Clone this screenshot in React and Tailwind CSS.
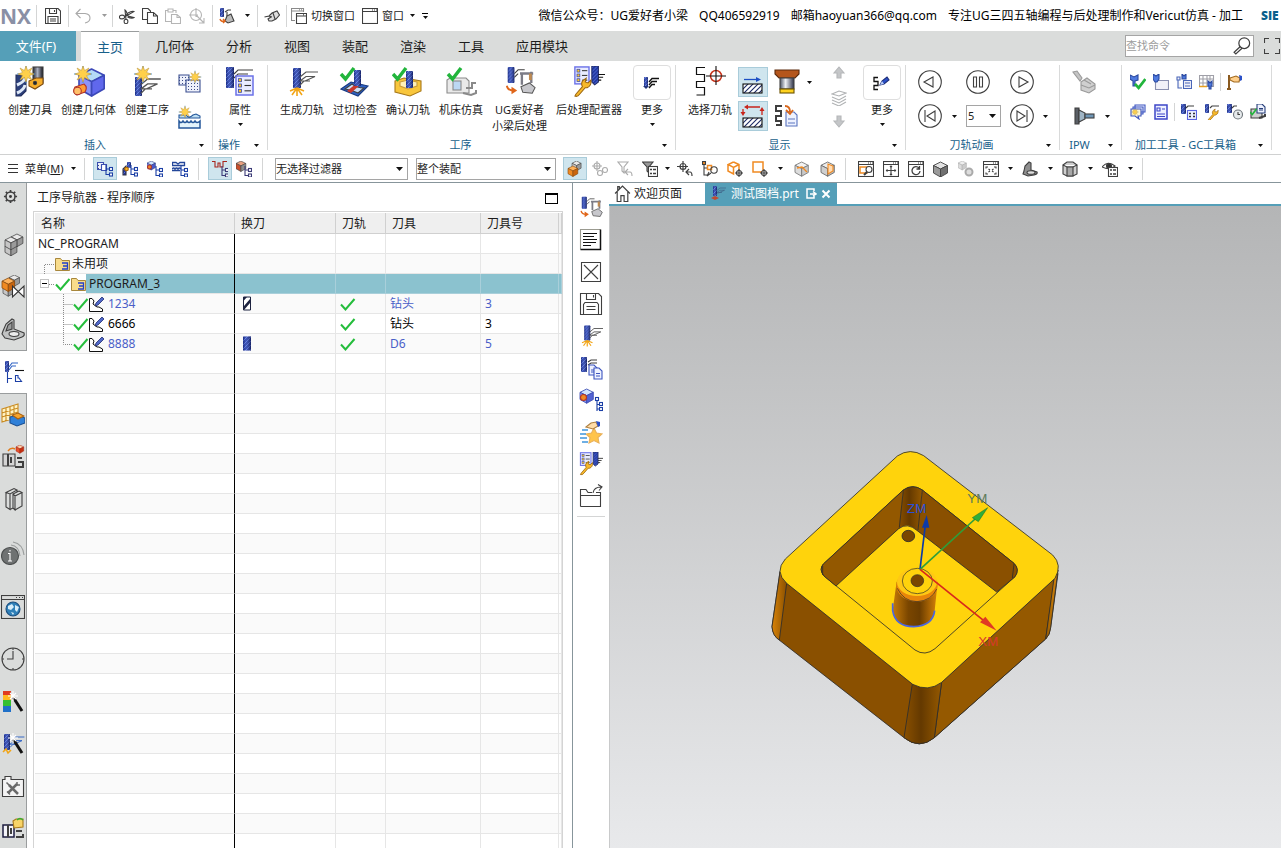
import { useState } from 'react';
import clsx from 'clsx';

/* ─── Shared drawing parts ─── */
const Defs = () => (
  <svg width="0" height="0" className="absolute" aria-hidden="true">
    <defs>
      <pattern id="flute" width="4" height="4" patternUnits="userSpaceOnUse">
        <rect width="4" height="4" fill="#2238a0" />
        <path d="M-1 3L3 -1M1 5L5 1" stroke="#5f7ce6" strokeWidth="0.9" />
      </pattern>
      <pattern id="hatch" width="5" height="5" patternUnits="userSpaceOnUse">
        <rect width="5" height="5" fill="#fff" />
        <path d="M-1 6L6 -1M-1 1L1 -1M4 6L6 4" stroke="#1b2a66" strokeWidth="1.1" />
      </pattern>
      <pattern id="dots" width="3" height="3" patternUnits="userSpaceOnUse">
        <rect width="3" height="3" fill="#eef1fb" />
        <rect x="1" y="1" width="1" height="1" fill="#3b4a86" />
      </pattern>
      <linearGradient id="steel">
        <stop offset="0" stopColor="#4d5566" />
        <stop offset="0.4" stopColor="#eef1f6" />
        <stop offset="1" stopColor="#2b2f45" />
      </linearGradient>
      <linearGradient id="darkSteel">
        <stop offset="0" stopColor="#23262f" />
        <stop offset="0.45" stopColor="#a9afc0" />
        <stop offset="1" stopColor="#14151c" />
      </linearGradient>
      <linearGradient id="shade">
        <stop offset="0" stopColor="#0a1246" stopOpacity="0.35" />
        <stop offset="0.35" stopColor="#9db4ff" stopOpacity="0.25" />
        <stop offset="1" stopColor="#05082e" stopOpacity="0.55" />
      </linearGradient>
      <linearGradient id="corner">
        <stop offset="0" stopColor="#8a5000" />
        <stop offset="0.45" stopColor="#643900" />
        <stop offset="1" stopColor="#955900" />
      </linearGradient>
      <linearGradient id="sideL">
        <stop offset="0" stopColor="#d98308" />
        <stop offset="1" stopColor="#8a5000" />
      </linearGradient>
      <linearGradient id="sideR">
        <stop offset="0" stopColor="#955900" />
        <stop offset="1" stopColor="#dd8a0c" />
      </linearGradient>
      <linearGradient id="bossBody">
        <stop offset="0" stopColor="#c67a08" />
        <stop offset="0.35" stopColor="#7a4600" />
        <stop offset="0.6" stopColor="#6b3d00" />
        <stop offset="1" stopColor="#d98308" />
      </linearGradient>
    </defs>
  </svg>
);

const Ico = ({ s = 16, vb = 16, children }) => (
  <svg width={s} height={s} viewBox={`0 0 ${vb} ${vb}`} fill="none" stroke="#3f3f3f" strokeWidth="1.1" className="shrink-0" aria-hidden="true">
    {children}
  </svg>
);

const Mill = ({ x, y, w, h }) => (
  <g stroke="none">
    <rect x={x} y={y} width={w} height={h} rx="1" fill="url(#flute)" />
    <rect x={x} y={y} width={w} height={h} rx="1" fill="url(#shade)" />
  </g>
);

const Feed = ({ x, y, s = 1, c = '#555' }) => (
  <path transform={`translate(${x} ${y}) scale(${s})`} d="M0 5L6 0H18M6 0M0 9L6 4.500H15L5 9H0M0 13L4 9H10" stroke={c} strokeWidth="1.2" />
);

const Burst = ({ x, y, s = 1 }) => (
  <g transform={`translate(${x} ${y}) scale(${s})`}>
    <path d="M0-9V9M-9 0H9" stroke="#4f8fc8" strokeWidth="1" />
    <path
      d="M0-8L1.600-3.500L6-6L3.500-1.600L8 0L3.500 1.600L6 6L1.600 3.500L0 8L-1.600 3.500L-6 6L-3.500 1.600L-8 0L-3.500-1.600L-6-6L-1.600-3.500Z"
      fill="#ffd04a"
      stroke="#c09a44"
      strokeWidth="0.6"
    />
  </g>
);

const Tick = ({ x, y, s = 1 }) => (
  <path transform={`translate(${x} ${y}) scale(${s})`} d="M0 6L4.500 11L13 0" stroke="#22b53c" strokeWidth="3.400" />
);

const Tree = ({ x, y, c = '#1b3fa6' }) => (
  <g transform={`translate(${x} ${y})`} stroke={c}>
    <path d="M1 0V9.500H4M1 4H4" />
    <rect x="4.500" y="2.500" width="3" height="3" fill="#fff" />
    <rect x="4.500" y="8" width="3" height="3" fill="#fff" />
  </g>
);

const Cube = ({ x, y, s = 1, a = '#e9e9e9', b = '#c6c6c6', c = '#9a9a9a', line = '#444' }) => (
  <g transform={`translate(${x} ${y}) scale(${s})`} stroke={line} strokeWidth="0.9" strokeLinejoin="round">
    <path d="M7 0L14 3.500L7 7L0 3.500Z" fill={a} />
    <path d="M0 3.500L7 7V15L0 11Z" fill={b} />
    <path d="M14 3.500L7 7V15L14 11Z" fill={c} />
  </g>
);

const Wrench = ({ x, y, s = 1 }) => (
  <path
    transform={`translate(${x} ${y}) scale(${s})`}
    d="M1 17L8 9Q6 5 9 2L12 0L11 4L14 5L17 2Q18 8 13 10L11 10L5 17Q3 20 0 19Z"
    fill="#f7b92a"
    stroke="#9a6510"
  />
);

const Page = ({ x, y, w = 9, h = 11, c = '#3d55c0' }) => (
  <g transform={`translate(${x} ${y})`} stroke={c}>
    <path d={`M0 0H${w - 3}L${w} 3V${h}H0Z`} fill="#eef2ff" />
    <path d={`M2 ${h / 2}H${w - 2}M2 ${h - 3}H${w - 2}`} />
  </g>
);

const List = ({ x, y, w, h }) => (
  <g transform={`translate(${x} ${y})`}>
    <rect width={w} height={h} fill="#e9ecff" stroke="#6b72e8" strokeWidth="1.500" />
    {[0.22, 0.5, 0.78].map((k) => (
      <g key={k}>
        <rect x={w * 0.15} y={h * k - 1.5} width="3" height="3" fill="#ffc928" stroke="#3a49a8" strokeWidth="0.800" />
        <path d={`M${w * 0.5} ${h * k}H${w * 0.88}`} stroke="#333" />
      </g>
    ))}
  </g>
);

const Window = ({ children }) => (
  <g>
    <rect x="0.500" y="0.500" width="15" height="15" fill="#fff" />
    <path d="M0.500 3.500H15.500M10 2H11M12 2H13M14 2H15" />
    {children}
  </g>
);

const Caret = ({ dim }) => (
  <svg width="5" height="3" viewBox="0 0 5 3" className="shrink-0" aria-hidden="true">
    <path d="M0 0H5L2.500 3Z" fill={dim ? '#9a9a9a' : '#111'} />
  </svg>
);

/* ─── Icons ─── */
const icons = {
  save: (
    <>
      <path d="M0.500 0.500H13L15.500 3V15.500H0.500Z" />
      <path d="M4.500 0.500V5.500H11.500V0.500M9.500 2V4M3 15.500V8.500H13V15.500M5 11H11M5 13H11" />
    </>
  ),
  undo: <path d="M5.500 1L1 5.500L5.500 10M1 5.500H10Q15 6 15 10Q15 14 10 15" stroke="#a9a9a9" />,
  cut: (
    <>
      <ellipse cx="3" cy="9" rx="2.600" ry="1.900" />
      <ellipse cx="7" cy="13.500" rx="1.900" ry="2.200" />
      <path d="M5.500 9L15 3.500Q13 2.500 9 5L6.500 8M7 11.500L6 2Q7.500 3 8 5.500L9 8L15 9.500Q13 11 8.500 9" />
    </>
  ),
  copy: (
    <>
      <path d="M5 11.500H0.500V0.500H6L8.500 3V4" />
      <path d="M5.500 4.500H11.500L15.500 8V15.500H5.500ZM11.500 4.500V8H15.500" fill="#fff" />
    </>
  ),
  paste: (
    <g stroke="#b5b5b5">
      <path d="M6 13.500H0.500V2.500H3V1H8V2.500H11V5M3 2.500V4H8V2.500" />
      <path d="M6.500 6.500H12L15.500 9.500V15.500H6.500ZM12 6.500V9.500H15.500" />
    </g>
  ),
  target: (
    <g stroke="#b5b5b5">
      <circle cx="7" cy="7" r="5.500" />
      <path d="M7 0V9M0 7H9M7 7L15 15M15 10V15H10M12 15H15V12" />
    </g>
  ),
  post: (
    <>
      <Mill x={1} y={0} w={4} h={9} />
      <path d="M6 4L9 2H12M8 4V8" />
      <path d="M8 8L12 6L15 13L9 15L6 13Z" fill="#bbb" />
      <path d="M1 11Q2 14 5 13M4 11L6 13L4 15" stroke="#e0661a" strokeWidth="1.500" />
    </>
  ),
  hand: (
    <path d="M0.500 9L5 8L8 5L13 3L15.500 7L12 11L8 13H5L4 11L7 9M5 8L8 9M9 5L11 11" fill="#ddd" />
  ),
  windows: (
    <>
      <path d="M4 12.500H0.500V0.500H12.500V4M0.500 3H12.500M8 1.700H9M10 1.700H11" stroke="#8a8a8a" />
      <path d="M5.500 5.500H15.500V15.500H5.500ZM5.500 8H15.500M12 6.800H13" fill="#fff" />
    </>
  ),
  window: <Window />,
  tFolderNode: (
    <>
      <path d="M0.500 1.500H6.500V8.500H0.500Z" fill="url(#dots)" stroke="#3b4fb0" />
      <path d="M4.500 3.500H9.500V9.500H4.500Z" fill="#fff" stroke="#3b4fb0" />
      <Tree x={8} y={4} />
    </>
  ),
  tTool: (
    <>
      <Mill x={5} y={1} w={4} h={6} />
      <path d="M1 14V8L4 5V14Z" fill="url(#flute)" stroke="#334" />
      <circle cx="4.500" cy="8" r="1.800" fill="#ffb529" stroke="#a60" />
      <Tree x={8} y={4} />
    </>
  ),
  tGeom: (
    <>
      <Cube x={0} y={0} s={0.6} a="#cfe4ff" b="#7b8df0" c="#4b59c8" line="#24357a" />
      <circle cx="2.500" cy="6" r="2" fill="#f08a22" stroke="#a33" />
      <Tree x={8} y={5} />
    </>
  ),
  tMethod: (
    <>
      <path d="M0.500 1.500H4L6 3L8 1.500H12.500V4.500H0.500ZM0 9.500H8M0 8Q1.500 6 3 8Q4.500 6 6 8Q7.500 6 9 8" stroke="#24479a" strokeWidth="1.300" />
      <Tree x={8} y={5} />
    </>
  ),
  tPath: (
    <>
      <path d="M0 0.500H3V6H6V2H8V6H11V0.500H15" stroke="#a8251c" strokeWidth="1.100" />
      <Tree x={9} y={5} c="#3c3c78" />
    </>
  ),
  tBody: (
    <>
      <Cube x={0} y={0} s={0.7} a="#e9a080" b="#c9502c" c="#8d8d8d" />
      <Tree x={8} y={5} c="#3c3c78" />
    </>
  ),
  bodyOrange: (
    <>
      <Cube x={5} y={0} s={0.65} />
      <Cube x={1} y={5} s={0.7} a="#ffb35c" b="#f08a22" c="#c9650e" line="#8a4d10" />
    </>
  ),
  linkDim: (
    <g stroke="#ababab">
      <circle cx="5" cy="5" r="3" />
      <path d="M5 0V10M0 5H10" />
      <circle cx="8" cy="12" r="2.500" />
      <circle cx="13" cy="9" r="2.500" />
    </g>
  ),
  filterDim: <path d="M1 1H11L7 6V12L5 10V6ZM11 8L8 11L11 14M8 11H13Q15 11 15 15" stroke="#ababab" />,
  filterList: (
    <>
      <path d="M0.500 1H11L7 6V12L5 10V6Z" fill="#999" />
      <rect x="6.500" y="5.500" width="9" height="10" fill="#fff" />
      <path d="M8 8.500H10M8 12.500H10M11 8.500H14M11 12.500H14" strokeWidth="1.600" />
    </>
  ),
  snap: <path d="M6 0V11M0 5.500H11M3 5.500A3 3 0 1 0 9 5.500A3 3 0 1 0 3 5.500M12 8L9 11L12 14M9 11H13Q15 11 15 15" strokeWidth="1.200" />,
  selTree: (
    <>
      <rect x="0.500" y="0.500" width="3" height="3" fill="#f08a22" />
      <path d="M2 4V14H5M2 7H6" />
      <rect x="5.500" y="4.500" width="4" height="4" stroke="#f08a22" strokeWidth="1.500" />
      <circle cx="12" cy="9" r="3.200" />
      <path d="M9 12L5 15L7 11" />
    </>
  ),
  selCube: (
    <>
      <path d="M6.500 1L12 3.500V9M12 3.500L6.500 6.500L1 3.500L6.500 1M1 3.500V10L6.500 13V6.500" stroke="#f08a22" strokeWidth="1.500" />
      <circle cx="12" cy="12" r="2.500" />
      <path d="M12 8V16M8 12H16" />
    </>
  ),
  selRect: (
    <>
      <rect x="1" y="1" width="10" height="10" stroke="#f08a22" strokeWidth="1.500" />
      <circle cx="12" cy="12" r="2.500" fill="#fff" />
      <path d="M12 8V16M8 12H16" />
    </>
  ),
  cubeCut: (
    <>
      <Cube x={1} y={1} s={0.95} a="#f2f2f2" b="#dcdcdc" c="#c9c9c9" line="#777" />
      <path d="M3 7L8 6L13 11" stroke="#f08a22" strokeWidth="1.300" />
    </>
  ),
  cubeFace: (
    <>
      <Cube x={1} y={1} s={0.95} a="#ececec" b="#cfcfcf" c="#bcbcbc" line="#666" />
      <path d="M8 3V13L13 10V5Z" fill="#ffdcb3" stroke="#f08a22" />
    </>
  ),
  winZoom: (
    <Window>
      <rect x="2" y="6" width="7" height="6" stroke="#f08a22" strokeWidth="1.500" />
      <circle cx="11" cy="8.500" r="3" fill="#fff" />
      <path d="M9 11L6 14" strokeWidth="2" />
    </Window>
  ),
  winPan: <Window><path d="M8 5V14M3.500 9.500H12.500M7 6L8 5L9 6M7 13L8 14L9 13M4.500 8.500L3.500 9.500L4.500 10.500M11.500 8.500L12.500 9.500L11.500 10.500" /></Window>,
  winRotate: <Window><path d="M11 7A4 4 0 1 0 12 10M11.500 5V8H8.500" strokeWidth="1.300" /></Window>,
  winFit: <Window><path d="M3 7.500V6H5M11 6H13V7.500M3 11.500V13H5M11 13H13V11.500M5.500 8L7 9M10.500 8L9 9M5.500 11L7 10M10.500 11L9 10" /></Window>,
  cubeDark: <Cube x={0.5} y={1} s={1} a="#e3e3e3" b="#9a9a9a" c="#707070" />,
  cubeDim: (
    <>
      <Cube x={0} y={0} s={0.6} a="#eee" b="#ddd" c="#ccc" line="#aaa" />
      <circle cx="11" cy="11" r="3.500" fill="#ddd" stroke="#aaa" strokeWidth="2" />
    </>
  ),
  bracket: (
    <>
      <path d="M2 10L3 5L7 1L9 2V9L15 11Q16 13 12 14L6 15L1 13Z" fill="#8f8f8f" />
      <ellipse cx="9" cy="11.500" rx="4" ry="1.800" fill="#ddd" />
    </>
  ),
  prism: (
    <>
      <path d="M1 4L5 1H11L15 4L11 6H5ZM1 4V13L5 15H11L15 13V4" fill="#cfcfcf" />
      <path d="M5 6V15H11V6Z" fill="#a8a8a8" />
    </>
  ),
  eyeList: (
    <>
      <path d="M0 6Q6 -1 13 5Q8 10 0 6Z" fill="#fff" />
      <circle cx="7" cy="5" r="2.500" fill="#333" />
      <rect x="6.500" y="6.500" width="9" height="9" fill="#fff" />
      <path d="M8 9H10M8 13H10M11 9H14M11 13H14" strokeWidth="1.500" />
    </>
  ),
  gear: (
    <>
      <circle cx="8" cy="8" r="4.800" strokeWidth="1.600" />
      <circle cx="8" cy="8" r="1" fill="#333" />
      <path d="M8 1V3.500M8 12.500V15M1 8H3.500M12.500 8H15M3 3L4.500 4.500M11.500 11.500L13 13M13 3L11.500 4.500M4.500 11.500L3 13" strokeWidth="1.800" />
    </>
  ),
};

const big = {
  createTool: (
    <>
      <rect x="19" y="1" width="10" height="16" fill="url(#darkSteel)" />
      <path d="M15 15L22 12H29V18L21 23L15 20Z" fill="#f6ae2c" stroke="#7d4a10" />
      <circle cx="21" cy="17" r="1.600" fill="#222" />
      <path d="M2 9L12 10V25L7 30H2Z" fill="#2b3f7a" stroke="#25305e" />
      <path d="M3 19Q10 16 11 12M3 27Q10 24 11 19" stroke="#dfe9f8" strokeWidth="3" />
      <Burst x={12} y={8} />
    </>
  ),
  createGeom: (
    <>
      <Cube x={6} y={3} s={1.8} a="#b5dcf6" b="#8c94f8" c="#6068ec" line="#3c49b8" />
      <path d="M2 21L11 18Q15 21 12 26L4 29Q-1 26 2 21Z" fill="#ff9d33" stroke="#b1352a" />
      <circle cx="4.500" cy="25" r="3.800" fill="#ffc06a" stroke="#b1352a" />
      <Burst x={10} y={8} />
    </>
  ),
  createOp: (
    <>
      <Mill x={4} y={11} w={7} h={19} />
      <Feed x={10} y={13} s={1.1} />
      <Burst x={12} y={8} />
    </>
  ),
  props: (
    <>
      <Mill x={2} y={1} w={8} h={21} />
      <path d="M10 8L14 4H29M10 12L14 8H24" />
      <List x={12} y={10} w={17} h={19} />
    </>
  ),
  generate: (
    <>
      <Mill x={7} y={2} w={8} h={20} />
      <Feed x={14} y={6} s={1} />
      <path d="M11 22V30M11 22L6 29M11 22L16 29M11 22L4 25M11 22L18 25" stroke="#f2a516" strokeWidth="1.600" />
    </>
  ),
  gouge: (
    <>
      <path d="M2 23L12 16L29 20L19 30Z" fill="#2f62c4" stroke="#183a80" />
      <path d="M6 23L13 18Q18 22 25 22L19 27Q13 24 6 23Z" fill="#c8dffa" />
      <path d="M8 25L18 17L22 18L12 27Z" fill="#c9382c" stroke="none" />
      <Mill x={15} y={4} w={7} h={16} />
      <Tick x={2} y={2} />
    </>
  ),
  verify: (
    <>
      <path d="M3 15L12 12L29 15V25L18 30L3 26Z" fill="#f8c63c" stroke="#a8791a" />
      <path d="M8 16L16 14L25 16V20L16 23L8 20Z" fill="#fff1b8" stroke="#c89a3a" />
      <Mill x={14} y={5} w={7} h={17} />
      <Tick x={1} y={2} />
    </>
  ),
  machine: (
    <>
      <path d="M2 14L5 12H21L24 15V27H2Z" fill="#e9e9e9" stroke="#8a8a8a" />
      <rect x="8" y="15" width="8" height="9" fill="#bcd8f4" stroke="#8a8a8a" />
      <path d="M21 22H27V17H31M18 27L26 29L31 27V24" stroke="#8a8a8a" strokeWidth="2" />
      <Tick x={3} y={2} />
    </>
  ),
  postUG: (
    <>
      <Mill x={4} y={1} w={7} h={17} />
      <path d="M11 8L15 4H22M11 12L15 8" />
      <path d="M17 8H31M29 6V18M19 9V20" strokeWidth="2.500" stroke="#7b7b86" />
      <path d="M28 8V15" stroke="#c08a50" strokeWidth="3" />
      <path d="M18 22L27 18L33 23L30 29L20 28Z" fill="#c7c7cc" stroke="#555" />
      <path d="M3 21Q4 26 10 26" stroke="#e0661a" strokeWidth="2" />
      <path d="M8 22L14 26L8 30Z" fill="#e0661a" stroke="none" />
    </>
  ),
  postConf: (
    <>
      <List x={2} y={1} w={15} h={18} />
      <path d="M20 0H27V17L23 20L20 17Z" fill="url(#flute)" stroke="#222c66" />
      <path d="M27 9H34M27 12H32M27 15H30" stroke="#111" />
      <Wrench x={2} y={13} />
    </>
  ),
  moreOp: (
    <>
      <Mill x={7} y={9} w={4} h={10} />
      <path d="M6 18H12L9 21Z" fill="#22357a" stroke="none" />
      <path d="M12 14L15 10.500H22M12 17L15 13.500H20M12 20L15 16.500H18" stroke="#111" strokeWidth="1.300" />
    </>
  ),
  pickPath: (
    <>
      <path d="M11 1.500H2.500V8.500H10.500V15.500H2.500V21.500H10.500V29H2.500" stroke="#111" strokeWidth="1.200" />
      <circle cx="22" cy="10" r="5.500" stroke="#c8351c" strokeWidth="1.500" />
      <path d="M22 0V19M12 10H32" stroke="#111" />
    </>
  ),
  moreShow: (
    <>
      <path d="M11 9.500H7V13.500H11V17.500H7V21.500H11" stroke="#111" strokeWidth="1.300" />
      <path d="M13 17L15 13L20 9L22 12L17 16Z" fill="#2b50c8" stroke="#1d2d77" />
      <path d="M13 17L15 13L17 16Z" fill="#b9cdf8" stroke="none" />
    </>
  ),
};

const RibbonButton = ({ icon, label, caret, children }) => (
  <button type="button" className="flex shrink-0 flex-col items-center">
    {children || <Ico s={32} vb={32}>{icon}</Ico>}
    <span className="mt-1 whitespace-pre-line text-center">{label}</span>
    {caret && <span className="flex h-3 items-center"><Caret /></span>}
  </button>
);

const MoreButton = ({ icon }) => (
  <RibbonButton label="更多" caret>
    <span className="-mt-px mb-[-2px] flex h-[35px] w-[38px] items-center justify-center rounded-sm border border-[#dedede] bg-white">
      <Ico s={30} vb={30}>{icon}</Ico>
    </span>
  </RibbonButton>
);

const Group = ({ label, className, bodyClass, children }) => (
  <>
    <section className={clsx('flex shrink-0 flex-col', className)}>
      <div className={clsx('flex h-[75px] items-start', bodyClass)}>{children}</div>
      <div className="flex h-[18px] items-center text-[#17608a]">
        <span className="flex-1 whitespace-nowrap text-center">{label}</span>
        <button type="button" aria-label={`${label} 选项`} className="flex h-4 w-[22px] items-center justify-center">
          <Caret />
        </button>
      </div>
    </section>
    <span className="my-1 w-px shrink-0 bg-[#d9dada]" />
  </>
);

const Tool = ({ name, label, on, className = 'w-6', children }) => (
  <button
    type="button"
    aria-label={label || name}
    className={clsx('flex h-[23px] shrink-0 items-center justify-center', className, on && 'border border-[#a9ccda] bg-[#cfe5ee]')}
  >
    {children || <Ico>{icons[name]}</Ico>}
  </button>
);

const Drop = ({ label, dim, className = 'w-3' }) => (
  <button type="button" aria-label={label || '展开'} className={clsx('flex h-5 shrink-0 items-center justify-center', className)}>
    <Caret dim={dim} />
  </button>
);

const Sep = ({ className }) => <span className={clsx('h-[22px] w-px shrink-0 bg-[#d4d5d5]', className)} />;

const Choice = ({ label, options, className, caretClass = 'right-1' }) => (
  <span className={clsx('relative flex h-[22px] shrink-0 items-center border border-[#a5a5a5] bg-white', className)}>
    <select aria-label={label} className="h-full w-full appearance-none bg-transparent outline-none">
      {options.map((o) => (
        <option key={o}>{o}</option>
      ))}
    </select>
    <span className={clsx('pointer-events-none absolute', caretClass)}>
      <svg width="7" height="4" viewBox="0 0 7 4" aria-hidden="true">
        <path d="M0 0H7L3.500 4Z" fill="#111" />
      </svg>
    </span>
  </span>
);

const TitleBar = () => (
  <header className="flex h-[31px] shrink-0 items-center overflow-hidden whitespace-nowrap bg-white text-[11px]">
    <span className="w-9 shrink-0 font-['Open_Sans',sans-serif] text-[21px] font-bold leading-[30px] text-[#8a90a5]">NX</span>
    <Sep />
    <Tool name="save" label="保存" className="w-[31px]" />
    <Sep />
    <Tool name="undo" label="撤消" className="w-7" />
    <Drop dim className="w-[15px]" />
    <Sep />
    <div className="flex pl-0.5">
      <Tool name="cut" label="剪切" />
      <Tool name="copy" label="复制" className="w-[22px]" />
      <Tool name="paste" label="粘贴" />
      <Tool name="target" label="重复命令" />
    </div>
    <Sep className="ml-[3px]" />
    <Tool name="post" label="后处理" className="w-7" />
    <Drop className="w-3" />
    <Sep className="ml-1" />
    <Tool name="hand" label="触控" className="w-7" />
    <Sep />
    <button type="button" className="ml-1 flex shrink-0 items-center gap-1">
      <Ico>{icons.windows}</Ico>
      切换窗口
    </button>
    <button type="button" className="ml-[7px] flex shrink-0 items-center gap-1">
      <Ico>{icons.window}</Ico>
      窗口
      <span className="ml-0.5"><Caret /></span>
    </button>
    <button type="button" aria-label="自定义工具条" className="ml-[7px] flex shrink-0 flex-col items-center gap-0.5">
      <span className="h-px w-1.5 bg-black" />
      <Caret />
    </button>
    <h1 className="ml-auto flex shrink-0 gap-[11px] text-[12px] text-black">
      <span>微信公众号：UG爱好者小梁</span>
      <span>QQ406592919</span>
      <span>邮箱haoyuan366@qq.com</span>
      <span>专注UG三四五轴编程与后处理制作和Vericut仿真 - 加工</span>
    </h1>
    <span className="ml-[18px] w-5 shrink-0 font-['Open_Sans',sans-serif] text-[12px] font-extrabold text-[#0b5f8c]">SIE</span>
  </header>
);

const menuTabs = ['主页', '几何体', '分析', '视图', '装配', '渲染', '工具', '应用模块'];

const MenuTabs = () => {
  const [active, setActive] = useState('主页');
  return (
    <nav className="flex h-[30px] shrink-0 items-stretch bg-[#dadcdb] text-[13px]">
      <button type="button" className="mr-[5px] w-[76px] shrink-0 bg-[#559fb8] pr-1 text-white">文件(F)</button>
      {menuTabs.map((tab) => (
        <button
          key={tab}
          type="button"
          onClick={() => setActive(tab)}
          className={clsx('shrink-0 whitespace-nowrap px-4', active === tab && 'border-t border-[#9a9d9e] bg-white text-[#17608a]')}
        >
          {tab}
        </button>
      ))}
      <label className="my-1 ml-auto flex w-[129px] items-center border border-[#a5a5a5] bg-white">
        <input placeholder="查找命令" aria-label="查找命令" className="min-w-0 flex-1 bg-transparent text-[11px] outline-none placeholder:text-[#9c9c9c]" />
        <span className="pr-0.5">
          <Ico s={18}>
            <circle cx="10" cy="5.500" r="4.800" />
            <path d="M6.500 8.500L1 13.500L2.500 15L8 10" />
          </Ico>
        </span>
      </label>
      <button type="button" aria-label="全屏" className="ml-2.5 w-[17px] shrink-0">
        <Ico>
          <path d="M0.500 5V0.500H5M11 0.500H15.500V5M0.500 11V15.500H5M11 15.500H15.500V11" />
        </Ico>
      </button>
    </nav>
  );
};

const Play = ({ label, d }) => (
  <button type="button" aria-label={label}>
    <Ico s={24} vb={24}>
      <circle cx="12" cy="12" r="11.300" />
      <path d={d} />
    </Ico>
  </button>
);

const GcCell = ({ label, children }) => (
  <button type="button" aria-label={label} className="flex h-[30px] w-[23px] shrink-0 items-center justify-center">
    <Ico>{children}</Ico>
  </button>
);

const Ribbon = () => (
  <div className="flex h-[93px] shrink-0 overflow-hidden bg-white text-[11px] leading-4">
    <Group label="插入" className="w-[212px]" bodyClass="gap-[9px] pl-2 pt-[5px]">
      <RibbonButton icon={big.createTool} label="创建刀具" />
      <RibbonButton icon={big.createGeom} label="创建几何体" />
      <RibbonButton icon={big.createOp} label="创建工序" />
      <div className="flex flex-col gap-[11px] pt-1">
        <button type="button" aria-label="创建程序">
          <Ico s={24} vb={24}>
            <path d="M1 5H11V15H1Z" fill="url(#dots)" stroke="#3b4f90" />
            <path d="M8 10H22V22H8Z" fill="url(#dots)" stroke="#3b4f90" />
            <Burst x={17} y={7} s={0.7} />
          </Ico>
        </button>
        <button type="button" aria-label="创建方法">
          <Ico s={24} vb={24}>
            <path d="M1 13V10H8Q11 14 15 10L18 9L22 11V13Z" fill="#bfe0f4" stroke="#24579a" />
            <path d="M1 23V16Q3 19 5 16Q7 19 9 16Q11 19 13 16Q15 19 17 16Q19 19 22 16V23Z" fill="#e4f4fc" stroke="#24579a" strokeWidth="1.500" />
            <Burst x={7} y={7} s={0.7} />
          </Ico>
        </button>
      </div>
    </Group>

    <Group label="操作" className="w-[54px]" bodyClass="justify-center pt-[5px]">
      <RibbonButton icon={big.props} label="属性" caret />
    </Group>

    <Group label="工序" className="w-[407px]" bodyClass="gap-[9px] pl-3 pt-[5px]">
      <RibbonButton icon={big.generate} label="生成刀轨" />
      <RibbonButton icon={big.gouge} label="过切检查" />
      <RibbonButton icon={big.verify} label="确认刀轨" />
      <RibbonButton icon={big.machine} label="机床仿真" />
      <RibbonButton label={'UG爱好者\n小梁后处理'}>
        <Ico s={32} vb={34}>{big.postUG}</Ico>
      </RibbonButton>
      <RibbonButton label="后处理配置器">
        <Ico s={32} vb={34}>{big.postConf}</Ico>
      </RibbonButton>
      <div className="pl-0.5">
        <MoreButton icon={big.moreOp} />
      </div>
    </Group>

    <Group label="显示" className="w-[229px]" bodyClass="gap-1.5 pl-3 pt-[5px]">
      <RibbonButton icon={big.pickPath} label="选择刀轨" />
      <div className="flex flex-col gap-1 pt-px">
        <button type="button" aria-label="显示方向" className="flex size-[30px] items-center justify-center border border-[#a9ccda] bg-[#cfe5ee]">
          <Ico s={28} vb={28}>
            <path d="M5 11.500H19" stroke="#1d4fc4" strokeWidth="1.300" />
            <path d="M17 9L22 11.500L17 14Z" fill="#1d4fc4" stroke="none" />
            <rect x="4" y="16" width="19" height="9" fill="url(#hatch)" stroke="#111" />
          </Ico>
        </button>
        <button type="button" aria-label="显示移刀" className="flex size-[30px] items-center justify-center border border-[#a9ccda] bg-[#cfe5ee]">
          <Ico s={28} vb={28}>
            <path d="M4 7V12M23 13V8M8 5H21" stroke="#c8251c" strokeWidth="1.300" />
            <path d="M1.500 10L4 14L6.500 10ZM20.500 9L23 5L25.500 9ZM9 2.500L5 5L9 7.500Z" fill="#c8251c" stroke="none" />
            <rect x="4" y="16" width="19" height="9" fill="url(#hatch)" stroke="#111" />
          </Ico>
        </button>
      </div>
      <div className="flex flex-col gap-2 pt-[3px]">
        <button type="button" aria-label="显示刀具">
          <Ico s={26} vb={26}>
            <path d="M1 1H25V5L21 9H5L1 5Z" fill="#b4561c" stroke="#5c2a0c" />
            <rect x="6" y="9" width="14" height="11" fill="url(#steel)" stroke="#444" />
            <rect x="6" y="20" width="14" height="4" fill="#ffd21f" stroke="#6b5200" />
          </Ico>
        </button>
        <button type="button" aria-label="输出刀轨">
          <Ico s={26} vb={26}>
            <path d="M8 3H2V8H7V13H2V18H7V22H2" strokeWidth="2" />
            <Page x={12} y={9} w={11} h={14} c="#5a74c0" />
            <path d="M11 3Q16 3 16 9M12 7L16 11L19 7" stroke="#d8661a" strokeWidth="1.800" />
          </Ico>
        </button>
      </div>
      <Drop className="mt-1.5 w-1.5" />
      <div className="ml-[13px] flex flex-col items-center gap-2">
        <Ico>
          <path d="M8 1L13 7H10V12H6V7H3Z" fill="#c4c6c8" stroke="#b5b7b9" />
        </Ico>
        <Ico>
          <path d="M1 4L8 1L15 3L8 6ZM1 7L8 10L15 6M1 13L8 16L15 12M1 10L8 13L15 9" stroke="#b0b2b4" />
        </Ico>
        <Ico>
          <path d="M8 13L13 7H10V2H6V7H3Z" fill="#c4c6c8" stroke="#b5b7b9" />
        </Ico>
      </div>
      <div className="ml-2.5">
        <MoreButton icon={big.moreShow} />
      </div>
    </Group>

    <Group label="刀轨动画" className="w-[153px]" bodyClass="pl-3 pt-[9px]">
      <div className="grid grid-cols-[24px_24px_44px_24px_22px] items-center gap-y-2.5">
        <Play label="反向播放" d="M15 7V17L6 12Z" />
        <span />
        <Play label="暂停" d="M7.500 7H10.500V17H7.500ZM13.500 7H16.500V17H13.500Z" />
        <Play label="播放" d="M9 7V17L18 12Z" />
        <span />
        <Play label="上一步" d="M17 7V17L9 12ZM7 6V18" />
        <Drop className="w-6" />
        <Choice label="速度" options={['5', '10']} className="w-[35px] pl-px" />
        <Play label="下一步" d="M7 7V17L15 12ZM17 6V18" />
        <Drop className="w-[22px]" />
      </div>
    </Group>

    <Group label="IPW" className="w-[61px]" bodyClass="pl-3 pt-[9px]">
      <div className="grid grid-cols-[24px_22px] items-center gap-y-2.5">
        <Ico s={24} vb={24}>
          <path d="M1 2L5 1L10 8L8 11Z" fill="#c4c4c4" stroke="#9a9a9a" />
          <path d="M9 12L15 8L23 14V19L17 23L9 20Z" fill="#cfcfcf" stroke="#9a9a9a" />
          <path d="M9 15L17 18L23 15M12 10L19 14" stroke="#9a9a9a" />
        </Ico>
        <span />
        <Ico s={24} vb={24}>
          <path d="M3 4H7V20H3Z" fill="#5a5f66" />
          <path d="M7 6L13 9V15L7 18Z" fill="#9fb4c4" />
          <rect x="13" y="10" width="9" height="4" fill="#6f96b5" />
        </Ico>
        <Drop className="w-[22px]" />
      </div>
    </Group>

    <Group label="加工工具 - GC工具箱" className="w-[149px]" bodyClass="pl-1 pt-[6px]">
      <div>
        <div className="flex items-center">
          <GcCell label="检查">
            <path d="M0 1L4 3L8 1V6L5 7V12H3V7L0 5Z" fill="#4f7ae0" stroke="#2b4aa0" />
            <Tick x={5} y={5} s={0.8} />
          </GcCell>
          <GcCell label="刀具模板">
            <path d="M2.500 6.500H15.500V15.500H2.500Z" fill="#f1f1f8" stroke="#8a90b0" />
            <path d="M0 0L3 2L6 0V5L4 8H2L0 5Z" fill="#4f7ae0" stroke="#2b4aa0" />
          </GcCell>
          <GcCell label="工序模板">
            <path d="M6 0L8 2L10 0V5H6Z" fill="#4f7ae0" stroke="#2b4aa0" />
            <path d="M1 3H4V6H1ZM2 6V14H6M7.500 6.500H15.500V14.500H7.500ZM9 9H14M9 12H14" fill="#f1f1f8" stroke="#4a66b8" />
          </GcCell>
          <GcCell label="数据表">
            <path d="M0.500 1.500H14.500V12.500H0.500ZM0.500 5H14.500M0.500 9H14.500M4 1.500V12.500M8 1.500V12.500M11 1.500V12.500" stroke="#a0a0a8" />
            <path d="M0 12.500H8" stroke="#e8a020" strokeWidth="1.500" />
            <path d="M9 7L11 9L13 7V12H12V15H10V12H9Z" fill="#4f7ae0" stroke="#2b4aa0" />
          </GcCell>
          <span className="mx-0.5 h-[18px] w-px bg-[#d4d5d5]" />
          <GcCell label="手动">
            <path d="M2 1V15M0 15H4" stroke="#8a5a20" strokeWidth="2" />
            <path d="M3 4L9 2L13 4L12 8L7 8L3 6Z" fill="#ffcf8a" stroke="#a06a20" />
            <path d="M12 1L15 2V6L13 7Z" fill="#2b50c8" stroke="none" />
          </GcCell>
        </div>
        <div className="flex items-center">
          <GcCell label="批处理">
            <path d="M5 1H15V8H5ZM3 3H13V10H3Z" fill="#eef1ff" stroke="#3d55c0" />
            <path d="M1 5H11V12H8L9 15L5 12H1Z" fill="#fff6d0" stroke="#3d55c0" />
            <Burst x={5} y={8} s={0.4} />
          </GcCell>
          <GcCell label="报告">
            <rect x="2" y="1" width="12" height="14" fill="#eef1ff" stroke="#3d46c8" strokeWidth="1.500" />
            <path d="M4 4H7V7H4ZM9 5H12M4 10H12M4 12.500H12" stroke="#3d46c8" />
          </GcCell>
          <span className="mx-0.5 h-[18px] w-px bg-[#d4d5d5]" />
          <GcCell label="工序列表">
            <Mill x={0} y={0} w={5} h={10} />
            <path d="M5 4L7 2H13" />
            <rect x="6.500" y="6.500" width="9" height="9" fill="#eef1ff" stroke="#5b64e0" />
            <path d="M8 9.500H10M8 12.500H10M12 9.500H14M12 12.500H14" stroke="#333" strokeWidth="1.500" />
          </GcCell>
          <GcCell label="工序设置">
            <Mill x={1} y={0} w={4} h={9} />
            <path d="M6 4L8 2H15" />
            <Wrench x={4} y={5} s={0.6} />
          </GcCell>
          <GcCell label="工时">
            <Mill x={0} y={0} w={5} h={9} />
            <path d="M5 4L7 2H10" />
            <circle cx="11" cy="10.500" r="4.500" fill="#e6eaec" stroke="#70777c" />
            <path d="M11 8V10.500H13" />
          </GcCell>
          <GcCell label="车间文档">
            <path d="M1 5H12V14H1Z" fill="#cfcfcf" />
            <Page x={7} y={0} w={8} h={9} c="#28407a" />
            <Tick x={0} y={5} s={0.5} />
            <path d="M9 14L15 12V10" strokeWidth="2" />
          </GcCell>
        </div>
      </div>
    </Group>
  </div>
);

const SelectionBar = () => (
  <div className="flex h-7 shrink-0 items-center overflow-hidden border-t border-[#d0d1d1] bg-white text-[11px]">
    <button type="button" className="flex w-[84px] shrink-0 items-center gap-[7px] pl-2">
      <svg width="10" height="9" viewBox="0 0 10 9" className="shrink-0" aria-hidden="true">
        <path d="M0 0.500H10M0 4.500H10M0 8.500H10" stroke="#333" />
      </svg>
      <span className="whitespace-nowrap">菜单(<u>M</u>)</span>
      <Caret />
    </button>
    <Sep />
    <div className="flex gap-px pl-2">
      <Tool name="tFolderNode" label="程序顺序视图" on />
      <Tool name="tTool" label="机床视图" />
      <Tool name="tGeom" label="几何视图" />
      <Tool name="tMethod" label="加工方法视图" />
    </div>
    <Sep className="ml-1.5" />
    <div className="flex pl-[9px]">
      <Tool name="tPath" label="显示刀轨" on />
      <Tool name="tBody" label="显示部件" />
    </div>
    <Sep className="ml-1.5" />
    <Choice label="选择过滤器" options={['无选择过滤器']} className="ml-3 w-[133px]" caretClass="right-1" />
    <Choice label="选择范围" options={['整个装配']} className="ml-2 w-[140px]" caretClass="right-1" />
    <div className="flex items-center gap-px pl-[7px]">
      <Tool name="bodyOrange" on />
      <Tool name="linkDim" />
      <Tool name="filterDim" />
      <Tool name="filterList" />
      <Drop className="-ml-px w-2.5" />
      <Tool name="snap" />
      <Tool name="selTree" />
      <Tool name="selCube" />
      <Tool name="selRect" />
      <Drop className="w-3.5" />
      <Tool name="cubeCut" className="w-7" />
      <Tool name="cubeFace" className="w-[22px]" />
    </div>
    <Sep className="ml-1.5" />
    <div className="flex items-center gap-px pl-2">
      <Tool name="winZoom" />
      <Tool name="winPan" />
      <Tool name="winRotate" />
      <Tool name="cubeDark" />
      <Tool name="cubeDim" />
      <Tool name="winFit" />
      <Drop />
      <Tool name="bracket" className="w-[26px]" />
      <Drop />
      <Tool name="prism" className="w-[26px]" />
      <Drop />
      <Tool name="eyeList" className="w-[26px]" />
      <Drop />
    </div>
    <Sep className="ml-1.5" />
  </div>
);

/* ─── Resource bar ─── */
const sideIcons = {
  assembly: (
    <>
      <Cube x={4} y={10} s={0.85} a="#dcdcdc" />
      <Cube x={10} y={1} s={0.85} />
      <Cube x={4} y={4} s={0.85} />
    </>
  ),
  constraint: (
    <>
      <Cube x={8} y={0} s={0.75} />
      <Cube x={2} y={10} s={0.75} />
      <Cube x={1} y={3} s={0.9} a="#ffb35c" b="#f08a22" c="#c9650e" line="#8a4d10" />
      <path d="M11.500 11V22L23 11V22Z" fill="#fff" stroke="#333" />
    </>
  ),
  part: (
    <>
      <path d="M2 14L5 7L11 2L13 3V12L23 16Q24 19 21 20L13 23L4 21L1 17Z" fill="#c0c2c2" />
      <path d="M5 14L7 8L11 5V12Z" fill="#9a9c9c" />
      <ellipse cx="13" cy="17" rx="5" ry="2.500" fill="#ececec" />
    </>
  ),
  opNav: (
    <>
      <Mill x={4} y={1} w={4} h={11} />
      <path d="M8 7L11 3H17M8 10L11 6H15" stroke="#2f62c4" />
      <path d="M14 10.500H23" stroke="#111" />
      <path d="M6.500 12V23M6.500 18.500H11M14.500 15.500V21.500H20.500L18 18H17V15.500Z" stroke="#1b3fa6" />
    </>
  ),
  feature: (
    <>
      <path d="M1 6L17 1V14L1 19ZM1 10L17 5M1 14L17 9M5 5V18M9 4V17M13 2V15" stroke="#c98a20" fill="#fff3c4" />
      <path d="M9 14L17 12L24 15V20L16 23L9 20Z" fill="#2f80d8" stroke="#1c4f90" />
      <path d="M11 12L17 10L23 13L17 16Z" fill="#f6a42c" stroke="#a86010" />
    </>
  ),
  machineNav: (
    <>
      <path d="M2 9H14V21H2Z" fill="#d4d4d4" />
      <path d="M7 9V21M10 12V18M16 13H21M17 17H22V22H14" strokeWidth="2" />
      <Cube x={15} y={0} s={0.55} a="#ffd0a8" b="#e8502c" c="#c63010" line="#a02010" />
      <path d="M7 6Q10 2 14 4" stroke="#e07a1a" strokeWidth="1.500" />
    </>
  ),
  library: (
    <path d="M5 5.500L13 1.500L16 3L9 7ZM5 5.500V20L9 22.500V7M9 22.500L12 21M16 3V5M12 7L18 4L21 5.500L14 9ZM12 7V21L14 23V9M14 23L21 19V5.500" />
  ),
  info: (
    <>
      <circle cx="9" cy="15" r="8.500" fill="#6f7272" stroke="#4c4f4f" />
      <path d="M9 12V20M7 12.500H9M7 20H11M9 9V10.500" stroke="#fff" />
      <path d="M10 4Q18 5 19 15M12 1Q22 3 23 14" stroke="#9a9d9d" />
    </>
  ),
  web: (
    <>
      <rect x="0.500" y="0.500" width="23" height="23" />
      <path d="M0.500 4.500H23.500M15 2.500H16M18 2.500H19M21 2.500H22" />
      <circle cx="12" cy="14" r="7" fill="#2f80b8" stroke="#1c4f80" />
      <path d="M7 11L11 9L13 12L10 15L7 14ZM14 10L18 12L16 17L14 15ZM10 17L13 18L12 20Z" fill="#d8eefa" stroke="none" />
    </>
  ),
  clock: (
    <>
      <circle cx="12" cy="12" r="11" />
      <path d="M12 4V12H6M12 1V3M12 21V23M1 12H3M21 12H23" />
    </>
  ),
  colors: (
    <>
      <g stroke="none">
        <rect x="2" y="1" width="8" height="4" fill="#e03a20" />
        <rect x="2" y="5" width="8" height="5" fill="#ffb81f" />
        <rect x="2" y="10" width="8" height="6" fill="#35c030" />
        <rect x="2" y="16" width="8" height="6" fill="#1f70c8" />
      </g>
      <path d="M12 7L21 21" stroke="#111" strokeWidth="3" />
      <path d="M12 1V11M7 6H17M9 3L15 9M15 3L9 9" stroke="#fff" />
    </>
  ),
  wand: (
    <>
      <Mill x={3} y={2} w={6} h={16} />
      <Feed x={9} y={5} s={0.8} c="#2f62c4" />
      <path d="M2 20L5 17L7 21L10 18" stroke="#f2a516" strokeWidth="1.600" />
      <path d="M12 7L21 21" stroke="#111" strokeWidth="3" />
      <path d="M12 1V11M7 6H17M9 3L15 9M15 3L9 9" stroke="#fff" />
    </>
  ),
  roles: (
    <>
      <path d="M1.500 22.500V5.500H4V2.500H10V5.500H22.500V22.500Z" fill="#f4f4f4" />
      <path d="M8 11L17 20M16 10L7 19" strokeWidth="2.500" stroke="#6a6a6a" />
      <path d="M5.500 8.500L8.500 11.500M16 8V11H19M6 17.500L9 20.500" strokeWidth="1.500" stroke="#6a6a6a" />
    </>
  ),
  library2: (
    <>
      <path d="M2 9H13V21H2Z" fill="#f4f4fa" stroke="#1c1c40" strokeWidth="1.500" />
      <path d="M7 9V21M10 12V18M15 15H21M15 21H22V18" strokeWidth="2" />
      <path d="M12 5L15 3H22V11L13 12Z" fill="#f8d468" stroke="#a8791a" />
      <path d="M16 4Q19 1 22 4" stroke="#35b030" strokeWidth="1.500" />
    </>
  ),
};

const sideTabs = [
  { key: 'assembly', label: '装配导航器', cls: 'h-[42px]' },
  { key: 'constraint', label: '约束导航器', cls: 'h-[42px]' },
  { key: 'part', label: '部件导航器', cls: 'h-[42px]' },
  { key: 'opNav', label: '工序导航器', cls: 'h-11' },
  { key: 'feature', label: '加工特征导航器', cls: 'h-[42px]' },
  { key: 'machineNav', label: '机床导航器', cls: 'h-[42px]' },
  { key: 'library', label: '重用库', cls: 'h-[42px]' },
  { key: 'info', label: 'HD3D 工具', cls: 'h-[66px]' },
  { key: 'web', label: 'Web 浏览器', cls: 'h-[42px]' },
  { key: 'clock', label: '历史记录', cls: 'h-[62px]' },
  { key: 'colors', label: '系统材料', cls: 'h-6' },
  { key: 'wand', label: '加工向导', cls: 'h-[60px]' },
  { key: 'roles', label: '角色', cls: 'h-6' },
  { key: 'library2', label: '模板库', cls: 'h-[60px]' },
];

const ResourceBar = () => (
  <nav className="flex w-[27px] shrink-0 flex-col overflow-hidden bg-[#dadcdb]">
    <button type="button" aria-label="设置" className="flex h-[41px] shrink-0 justify-center border-r border-[#9a9d9e] pr-1.5 pt-1.5">
      <Ico s={15}>{icons.gear}</Ico>
    </button>
    {sideTabs.map((t) => (
      <button
        key={t.key}
        type="button"
        aria-label={t.label}
        className={clsx(
          'flex shrink-0 items-center border-[#9a9d9e] pl-px',
          t.cls,
          t.key === 'opNav' ? 'border-y bg-white' : 'border-r'
        )}
      >
        <Ico s={24} vb={24}>{sideIcons[t.key]}</Ico>
      </button>
    ))}
    <span className="flex-1 border-r border-[#9a9d9e]" />
  </nav>
);

/* ─── Operation navigator ─── */
const Check = () => (
  <svg width="16" height="16" viewBox="0 0 16 16" className="shrink-0" aria-hidden="true">
    <path d="M1 8.500L5.500 13.500L14.500 3" fill="none" stroke="#25bd3c" strokeWidth="2" />
  </svg>
);

const Folder = () => (
  <svg width="15" height="14" viewBox="0 0 15 14" className="shrink-0" aria-hidden="true">
    <path d="M0.500 13.500V1.500H5.500L7 3.500H14.500V13.500Z" fill="#f8dc8c" stroke="#a8873c" />
    <path d="M7 6H12.500V9H8M12.500 9V12H7" fill="none" stroke="#2440c8" strokeWidth="1.300" />
  </svg>
);

const OpGlyph = () => (
  <svg width="16" height="16" viewBox="0 0 16 16" className="shrink-0" aria-hidden="true">
    <path d="M0.500 2.500V15.500H13.500V13L10 11H8L4 8L5 5L3 2.500Z" fill="#fff" stroke="#111" />
    <path d="M6 10L7 7L13 1L15 3L9 9Z" fill="#5068c8" stroke="#202c70" strokeWidth="0.800" />
  </svg>
);

const Branch = ({ d, w }) => (
  <svg width={w} height="20" viewBox={`0 0 ${w} 20`} className="shrink-0" aria-hidden="true">
    <path d={d} fill="none" stroke="#8a8a8a" strokeDasharray="1 1" />
  </svg>
);

const ops = [
  { name: '1234', change: 'drill', tool: '钻头', no: '3', color: 'text-[#4a5fc8]', branch: 'M28.500 0V20M28.500 10.500H38' },
  { name: '6666', change: null, tool: '钻头', no: '3', color: 'text-black', branch: 'M28.500 0V20M28.500 10.500H38' },
  { name: '8888', change: 'mill', tool: 'D6', no: '5', color: 'text-[#4a5fc8]', branch: 'M28.500 0V10.500H38' },
];

const ChangeGlyph = ({ kind }) => (
  <svg width="10" height="15" viewBox="0 0 10 15" aria-hidden="true">
    {kind === 'drill' ? (
      <>
        <path d="M1.500 1H8.500V14H1.500Z" fill="#fff" stroke="#1d2340" />
        <path d="M2 10L8 3V7L2 14ZM1.500 5L5 1H1.500Z" fill="#1d2340" />
      </>
    ) : (
      <>
        <rect x="1" y="0.500" width="8" height="14" fill="url(#flute)" />
        <rect x="1" y="0.500" width="8" height="14" fill="url(#shade)" />
      </>
    )}
  </svg>
);

const cell = 'h-5 border-b border-r border-[#e6e6e6] p-0';
const blackCell = 'h-5 border-b border-r border-b-[#e6e6e6] border-r-black p-0';
const selCell = 'h-5 border-b border-r border-[#a9cfda] bg-[#8bc2cf] p-0';
const emptyRows = Array.from({ length: 60 }, (_, i) => i);

const Navigator = () => (
  <section className="flex w-[546px] shrink-0 flex-col overflow-hidden border-r border-[#87959b] bg-white pl-1.5">
    <div className="flex h-7 shrink-0 items-center justify-between pl-1 pr-3.5 pt-0.5">
      <h2>工序导航器 - 程序顺序</h2>
      <button type="button" aria-label="最大化" className="h-[11px] w-[13px] border border-t-2 border-black" />
    </div>
    <div className="mr-[9px] min-h-0 flex-1 overflow-hidden border-l border-r border-t border-[#d4d4d4] pl-px pt-px">
      <table className="w-full table-fixed border-separate border-spacing-0">
        <colgroup>
          <col className="w-[200px]" />
          <col className="w-[101px]" />
          <col className="w-[50px]" />
          <col className="w-[95px]" />
          <col className="w-[78px]" />
          <col />
        </colgroup>
        <thead>
          <tr className="text-left">
            {['名称', '换刀', '刀轨', '刀具', '刀具号', ''].map((h) => (
              <th key={h} className="h-[21px] border-b border-r border-[#d0d0d0] bg-[#efefef] pb-0 pl-1.5 pt-px font-normal leading-[18px]">
                {h}
              </th>
            ))}
          </tr>
        </thead>
        <tbody>
          <tr>
            <td className={clsx(blackCell, 'pl-[3px]')}>NC_PROGRAM</td>
            <td className={cell} /><td className={cell} /><td className={cell} /><td className={cell} /><td className={cell} />
          </tr>
          <tr className="bg-[#fafafa]">
            <td className={blackCell}>
              <div className="flex h-[19px] items-center">
                <Branch w={20} d="M9.500 20V10.500H19" />
                <Folder />
                <span className="pl-0.5">未用项</span>
              </div>
            </td>
            <td className={cell} /><td className={cell} /><td className={cell} /><td className={cell} /><td className={cell} />
          </tr>
          <tr>
            <td className={blackCell}>
              <div className="flex h-[19px] items-center">
                <button type="button" aria-label="折叠" className="ml-[5px] flex size-[9px] items-center justify-center border border-[#c4c4c4]">
                  <span className="h-px w-[5px] bg-black" />
                </button>
                <Branch w={6} d="M0 10.500H5" />
                <Check />
                <Folder />
                <span className="flex h-full flex-1 items-center bg-[#8bc2cf] pl-[3px]">PROGRAM_3</span>
              </div>
            </td>
            <td className={selCell} /><td className={selCell} /><td className={selCell} /><td className={selCell} /><td className={selCell} />
          </tr>
          {ops.map((op, i) => (
            <tr key={op.name} className={clsx(op.color, i % 2 === 0 && 'bg-[#fafafa]')}>
              <td className={blackCell}>
                <div className="flex h-[19px] items-center">
                  <Branch w={38} d={op.branch} />
                  <Check />
                  <OpGlyph />
                  <span className="pl-[3px]">{op.name}</span>
                </div>
              </td>
              <td className={clsx(cell, 'pl-[7px]')}>{op.change && <ChangeGlyph kind={op.change} />}</td>
              <td className={clsx(cell, 'pl-1')}><Check /></td>
              <td className={clsx(cell, 'pl-1')}>{op.tool}</td>
              <td className={clsx(cell, 'pl-1')}>{op.no}</td>
              <td className={cell} />
            </tr>
          ))}
          {emptyRows.map((r) => (
            <tr key={r} className={r % 2 === 1 ? 'bg-[#fafafa]' : 'bg-white'}>
              <td className={blackCell} />
              <td className={cell} /><td className={cell} /><td className={cell} /><td className={cell} /><td className={cell} />
            </tr>
          ))}
        </tbody>
      </table>
    </div>
  </section>
);

/* ─── Quick strip next to the viewport ─── */
const stripTools = [
  { label: '后处理', vb: 34, art: big.postUG },
  {
    label: '列表',
    art: (
      <>
        <path d="M1.500 21.500V1.500H21.500" stroke="#9a9a90" />
        <path d="M21.500 1.500V21.500H1.500" stroke="#111" strokeWidth="1.500" />
        <path d="M4 5.500H18M4 8.500H15M4 11.500H18M4 14.500H17M4 17.500H12" stroke="#111" />
      </>
    ),
  },
  { label: '关闭', art: <path d="M2.500 2.500H21.500V21.500H2.500ZM5 5L19 19M19 5L5 19" /> },
  {
    label: '保存',
    art: <path d="M1.500 1.500H19.500L22.500 4.500V22.500H1.500ZM7.500 1.500V7.500H16.500V1.500M14.500 3V5.500M4.500 22.500V12.500L6 10.500H18L19.500 12.500V22.500M7.500 14.500H16.500M7.500 17.500H16.500" />,
  },
  { label: '生成刀轨', vb: 32, art: big.generate },
  {
    label: '复制刀轨',
    art: (
      <>
        <Mill x={2} y={1} w={6} h={15} />
        <path d="M9 6L12 4H18M9 9L12 7H18" />
        <Page x={10} y={9} w={8} h={10} />
        <Page x={15} y={12} w={8} h={11} />
      </>
    ),
  },
  {
    label: '几何视图',
    art: (
      <>
        <Cube x={1} y={1} s={0.95} a="#cfe4ff" b="#8a9af4" c="#5262d4" line="#3a4ab0" />
        <circle cx="4.500" cy="9.500" r="3" fill="#f08a22" stroke="#b1352a" />
        <g transform="translate(16 9)" stroke="#1b3fa6">
          <rect x="0.500" y="0.500" width="3" height="3" />
          <path d="M2 4V14M2 7.500H4.500M2 12H4.500" />
          <rect x="4.500" y="5.500" width="3" height="3" />
          <rect x="4.500" y="10.500" width="3" height="3" />
        </g>
      </>
    ),
  },
  {
    label: '快速选取',
    art: (
      <>
        <path d="M15 8L17.500 13L23 14L19 17.500L20 23L15 20.500L10 23L11 17.500L7 14L12.500 13Z" fill="#ffc44a" stroke="#e8b05a" />
        <path d="M7 7L12 3L17 2L19 6L14 9Z" fill="#ffdca8" stroke="#b08040" />
        <path d="M17 1L21 2V6L19 7Z" fill="#2b50c8" stroke="none" />
        <path d="M3 10H9M1 14H7M1 18H8M3 22H9" stroke="#3f95dc" strokeWidth="1.300" />
      </>
    ),
  },
  { label: '后处理配置器', vb: 34, art: big.postConf },
  {
    label: '导出',
    art: <path d="M1.500 22.500V5.500H7L9 8.500H13M1.500 11.500H21.500V22.500H1.500M21.500 11.500V8.500H17M14 9Q15 3 22 3M19 0.500L23 3L20 6.500" />,
  },
];

const QuickStrip = () => (
  <aside className="flex w-9 shrink-0 flex-col items-center bg-white pt-[9px]">
    {stripTools.map((t) => (
      <button key={t.label} type="button" aria-label={t.label} className="flex h-8 w-8 shrink-0 items-center justify-center">
        <Ico s={24} vb={t.vb || 24}>{t.art}</Ico>
      </button>
    ))}
    <span className="mt-1 h-px w-7 bg-[#d4d5d5]" />
  </aside>
);

/* ─── Part model ─── */
const PartModel = () => (
  <svg width="310" height="315" viewBox="0 0 930 945" className="absolute left-[150px] top-[234px]" role="img" aria-label="测试图档">
    <g stroke="#2c2c2c" strokeWidth="2.500" strokeLinejoin="round">
      {/* sides */}
      <path d="M60 395L36 560Q38 588 60 602L432 893Q478 930 523 893L857 597Q870 585 872 562L894 400L500 500Z" fill="#8a5000" />
      <path d="M545 725L523 893L857 597L884 415Z" fill="#955900" />
      <path d="M458 725L432 893Q478 930 523 893L545 725Z" fill="url(#corner)" />
      <path d="M60 395L36 560Q38 588 58 600L80 430Z" fill="url(#sideL)" />
      <path d="M894 390L872 562Q870 585 857 597L882 415Z" fill="url(#sideR)" />
      {/* top face */}
      <path d="M76 357L412 48Q450 22 491 47L878 345Q908 375 885 415L545 727Q505 757 458 733L80 430Q42 395 76 357Z" fill="#ffd30c" />
      {/* pocket */}
      <path d="M190 372L430 150Q458 130 487 150L762 370Q780 388 765 410L525 626Q495 650 465 630L192 408Q176 388 190 372Z" fill="#ffd30c" />
    </g>
    <path d="M190 372L430 150L418 265L228 438L192 408Q176 388 190 372Z" fill="#935800" />
    <path d="M487 150L762 370Q780 388 765 410L710 456L472 272Z" fill="#8a5000" />
    <path d="M430 150Q458 130 487 150L474 274Q442 244 416 266Z" fill="url(#corner)" />
    <g fill="none" stroke="#2c2c2c" strokeWidth="2.500">
      <path d="M190 372L430 150Q458 130 487 150L762 370Q780 388 765 410L710 456L472 272Q442 246 416 266L228 438L192 408Q176 388 190 372Z" />
      <path d="M430 150L418 262M487 150L474 270M188 378V405M762 372L757 414" />
      <ellipse cx="445" cy="288" rx="19" ry="17" fill="#7a4600" />
    </g>
    {/* boss */}
    <path d="M410 425L398 510Q406 560 461 560Q518 558 524 512L533 425Z" fill="url(#bossBody)" />
    <path d="M398 490V512Q406 560 461 560Q518 558 524 512" fill="none" stroke="#4a66e0" strokeWidth="5" />
    <ellipse cx="471" cy="437" rx="62" ry="48" fill="#e8860a" />
    <ellipse cx="471" cy="426" rx="60" ry="42" fill="#ffc814" />
    <g stroke="#2c2c2c" strokeWidth="2">
      <path d="M412 445Q430 484 471 485Q515 482 530 447" fill="none" />
      <ellipse cx="472" cy="423" rx="45" ry="38" fill="#ffd30c" />
      <ellipse cx="472" cy="422" rx="19" ry="18" fill="#7a4600" />
    </g>
    {/* coordinate axes */}
    <g strokeWidth="5">
      <path d="M480 388L496 255" stroke="#0c3aa8" />
      <path d="M500 225L508 263H486Z" fill="#0c3aa8" />
      <path d="M480 388L655 228" stroke="#2f9e3a" />
      <path d="M683 203L655 245L637 233Z" fill="#2fae3a" stroke="#1c6e26" strokeWidth="1.500" />
      <path d="M480 388L675 545" stroke="#d8291c" />
      <path d="M710 572L660 547L676 530Z" fill="#e03a24" />
    </g>
    <g fontFamily="Liberation Sans, sans-serif" fontSize="40">
      <text x="441" y="220" fill="#2a50d8">ZM</text>
      <text x="622" y="189" fill="#5e7a58">YM</text>
      <text x="655" y="617" fill="#d8392c">XM</text>
    </g>
  </svg>
);

const Viewport = () => (
  <main className="flex min-w-0 flex-1 flex-col bg-white">
    <div className="flex h-[23px] shrink-0 items-stretch border-b-2 border-[#559fb8]">
      <button type="button" className="flex w-24 items-center gap-[3px] pl-[5px]">
        <Ico s={17}>
          <path d="M1 8L8 1L15 8M3 6.500V15.500H6.500V10H9.500V15.500H13V6.500M3.500 5V1.500H5V4" />
        </Ico>
        欢迎页面
      </button>
      <div className="flex w-[132px] items-center bg-[#559fb8] pl-1.5 text-white">
        <Ico>
          <Mill x={2} y={0} w={4} h={10} />
          <path d="M0 12L4 10L8 12L4 14Z" fill="#c04a30" stroke="none" />
          <Feed x={6} y={2} s={0.5} c="#3c5a80" />
        </Ico>
        <span className="ml-1 flex-1 whitespace-nowrap">测试图档.prt</span>
        <svg width="11" height="11" viewBox="0 0 11 11" className="shrink-0" aria-hidden="true">
          <path d="M8 3V1H1V10H8V8M4 6H9M7 3.500L10 6L7 8" fill="none" stroke="#fff" strokeWidth="1.500" />
        </svg>
        <button type="button" aria-label="关闭" className="ml-1 mr-1.5 shrink-0">
          <svg width="10" height="10" viewBox="0 0 10 10" aria-hidden="true">
            <path d="M1.500 1.500L8.500 8.500M8.500 1.500L1.500 8.500" stroke="#fff" strokeWidth="2" />
          </svg>
        </button>
      </div>
    </div>
    <div className="relative min-h-0 flex-1 overflow-hidden border-l border-[#c9cacb] bg-linear-to-b from-[#b4b5b6] to-[#e8e9eb]">
      <PartModel />
    </div>
  </main>
);

const App = () => (
  <div className="flex h-screen flex-col overflow-hidden bg-white font-['Noto_Sans','Noto_Sans_CJK_SC',sans-serif] text-[12px] leading-4 text-[#1c1c1c]">
    <Defs />
    <TitleBar />
    <MenuTabs />
    <Ribbon />
    <SelectionBar />
    <div className="flex min-h-0 flex-1 border-t border-[#87959b]">
      <ResourceBar />
      <Navigator />
      <QuickStrip />
      <Viewport />
    </div>
  </div>
);

export default App;
